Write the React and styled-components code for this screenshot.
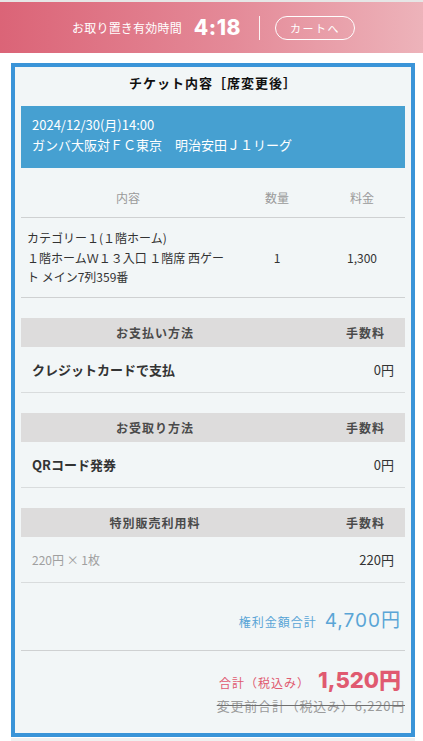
import React from 'react';
import styled, { createGlobalStyle } from 'styled-components';

const JP = `"Noto Sans CJK JP", "Noto Sans", sans-serif`;
const NUM = `Inter, "Noto Sans CJK JP", sans-serif`;

const GlobalStyle = createGlobalStyle`
  html, body {
    margin: 0;
    padding: 0;
    background: #ffffff;
    font-family: ${JP};
    color: #333333;
  }
  * { box-sizing: border-box; }
`;

const Header = styled.header`
  height: 53px;
  border-top: 2px solid #e6e6e6;
  background: linear-gradient(90deg, #db6477 0%, #e48a98 55%, #edb3ba 100%);
  display: flex;
  align-items: center;
  justify-content: center;
  padding-left: 4px;
  color: #ffffff;
`;

const HoldLabel = styled.span`
  font-size: 12px;
  letter-spacing: 0.2px;
  margin-right: 12px;
`;

const Timer = styled.span`
  font-family: ${NUM};
  font-weight: 800;
  font-size: 21px;
  letter-spacing: 0.5px;
`;

const Divider = styled.span`
  width: 1px;
  height: 24px;
  background: rgba(255, 255, 255, 0.9);
  margin: 0 15px 0 18px;
`;

const CartButton = styled.button`
  width: 80px;
  height: 24px;
  border: 1px solid #ffffff;
  border-radius: 12px;
  background: transparent;
  color: #ffffff;
  font-family: ${JP};
  font-size: 11px;
  letter-spacing: 1.5px;
  padding: 0;
  cursor: pointer;
`;

const Page = styled.main`
  padding: 10px 8px 0 11px;
`;

const Card = styled.section`
  border: 4px solid #3a94d8;
  background: #f2f6f7;
  padding: 0 6px;
`;

const Title = styled.h2`
  margin: 0;
  padding-top: 6px;
  margin-bottom: 13px;
  line-height: 20px;
  font-size: 13px;
  font-weight: 700;
  letter-spacing: 1px;
  text-align: center;
  color: #111111;
`;

const EventBlock = styled.div`
  background: #46a0d1;
  color: #ffffff;
  padding: 9px 11px 13px;
  font-size: 13px;
  line-height: 20px;
`;

const ItemGrid = styled.div`
  display: grid;
  grid-template-columns: 214px 84px 1fr;
`;

const HeadCell = styled.div`
  padding: 21px 0 11px;
  line-height: 17px;
  font-size: 12px;
  color: #9a9a9a;
  text-align: center;
  border-bottom: 1px solid #cfd1d2;
`;

const BodyCell = styled.div`
  padding: 10px 6px;
  font-size: 12px;
  line-height: 19.5px;
  color: #333333;
  text-align: ${p => (p.$left ? 'left' : 'center')};
  display: flex;
  align-items: center;
  justify-content: ${p => (p.$left ? 'flex-start' : 'center')};
  border-bottom: 1px solid #cfd1d2;
`;

const FeeHead = styled.div`
  margin-top: 20px;
  height: 29px;
  background: #dddcdc;
  display: grid;
  grid-template-columns: 268px 1fr;
  align-items: center;
  font-size: 12px;
  font-weight: 700;
  letter-spacing: 1px;
  color: #4a4a4a;
`;

const FeeHeadLabel = styled.span`
  text-align: ${p => (p.$right ? 'right' : 'center')};
  padding-right: ${p => (p.$right ? '20px' : '0')};
`;

const FeeRow = styled.div`
  height: 46px;
  display: flex;
  align-items: center;
  justify-content: space-between;
  padding: 0 11px;
  border-bottom: 1px solid #d9dcdd;
`;

const FeeName = styled.span`
  font-size: ${p => (p.$muted ? '12px' : '13px')};
  font-weight: ${p => (p.$muted ? 400 : 700)};
  color: ${p => (p.$muted ? '#a0a0a0' : '#333333')};
  white-space: pre;
`;

const FeeValue = styled.span`
  font-size: 13px;
  color: #333333;
`;

const TotalBlock = styled.div`
  padding: ${p => p.$pad};
  display: flex;
  flex-direction: column;
  align-items: flex-end;
  padding-right: 4px;
  border-bottom: ${p => (p.$line ? '1px solid #cfd1d2' : 'none')};
`;

const TotalLine = styled.div`
  display: flex;
  align-items: baseline;
  gap: 8px;
  height: ${p => p.$h};
  line-height: ${p => p.$h};
  color: ${p => p.$color};
`;

const TotalLabel = styled.span`
  font-size: 12px;
  letter-spacing: 1px;
`;

const TotalAmount = styled.span`
  font-family: ${NUM};
  font-size: ${p => p.$size};
  font-weight: ${p => p.$weight};
  letter-spacing: ${p => (p.$weight > 500 ? '0' : '1px')};
`;

const Yen = styled.span`
  font-family: ${JP};
`;

const PrevTotal = styled.div`
  height: 20px;
  line-height: 20px;
  font-size: 13px;
  letter-spacing: 0.8px;
  color: #9b9b9b;
  text-decoration: line-through;
  text-decoration-color: #6f6f6f;
  margin-top: 3px;
  margin-right: -4px;
`;

const Footer = styled.div`
  height: 4px;
  margin-top: 1px;
  background: #f0f0f0;
`;

const fees = [
  { title: 'お支払い方法', name: 'クレジットカードで支払', value: '0円' },
  { title: 'お受取り方法', name: 'QRコード発券', value: '0円' },
  { title: '特別販売利用料', name: '220円 × 1枚', value: '220円', muted: true },
];

export default function App() {
  return (
    <>
      <GlobalStyle />
      <Header>
        <HoldLabel>お取り置き有効時間</HoldLabel>
        <Timer>4:18</Timer>
        <Divider />
        <CartButton>カートへ</CartButton>
      </Header>
      <Page>
        <Card>
          <Title>チケット内容［席変更後］</Title>
          <EventBlock>
            <div>2024/12/30(月)14:00</div>
            <div>ガンバ大阪対ＦＣ東京　明治安田Ｊ１リーグ</div>
          </EventBlock>

          <ItemGrid>
            <HeadCell>内容</HeadCell>
            <HeadCell>数量</HeadCell>
            <HeadCell>料金</HeadCell>
            <BodyCell $left>
              カテゴリー１(１階ホーム)
              <br />
              １階ホームＷ１３入口 １階席 西ゲート メイン7列359番
            </BodyCell>
            <BodyCell>1</BodyCell>
            <BodyCell>1,300</BodyCell>
          </ItemGrid>

          {fees.map(f => (
            <div key={f.title}>
              <FeeHead>
                <FeeHeadLabel>{f.title}</FeeHeadLabel>
                <FeeHeadLabel $right>手数料</FeeHeadLabel>
              </FeeHead>
              <FeeRow>
                <FeeName $muted={f.muted}>{f.name}</FeeName>
                <FeeValue>{f.value}</FeeValue>
              </FeeRow>
            </div>
          ))}

          <TotalBlock $pad="22px 0 17px" $line>
            <TotalLine $h="28px" $color="#5aa5d6">
              <TotalLabel>権利金額合計</TotalLabel>
              <TotalAmount $size="19px" $weight={400}>4,700<Yen>円</Yen></TotalAmount>
            </TotalLine>
          </TotalBlock>

          <TotalBlock $pad="12px 0 17px">
            <TotalLine $h="30px" $color="#e05a70">
              <TotalLabel>合計（税込み）</TotalLabel>
              <TotalAmount $size="22px" $weight={800}>1,520<Yen>円</Yen></TotalAmount>
            </TotalLine>
            <PrevTotal>変更前合計（税込み）6,220円</PrevTotal>
          </TotalBlock>
        </Card>
        <Footer />
      </Page>
    </>
  );
}
